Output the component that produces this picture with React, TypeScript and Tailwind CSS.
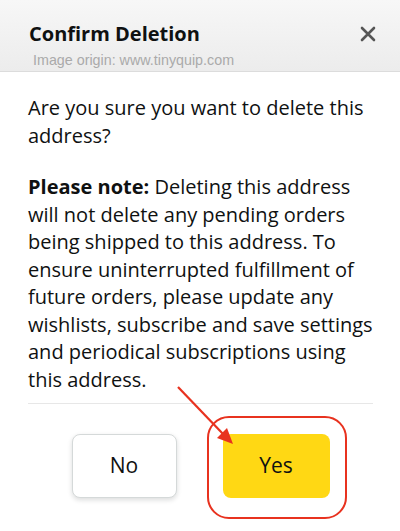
import React from "react";

const font = { fontFamily: '"Open Sans", "Noto Sans", Arial, sans-serif' };

const CloseIcon = () => (
	<svg width="16" height="16" viewBox="0 0 16 16" className="text-[#555]">
		<path d="M2 2 L14 14 M14 2 L2 14" stroke="currentColor" strokeWidth="2.6" strokeLinecap="round" />
	</svg>
);

// red callout drawn over the confirm button
const Callout = () => (
	<svg className="absolute inset-0 pointer-events-none" width="400" height="531" viewBox="0 0 400 531">
		<rect x="208" y="417" width="138" height="101" rx="21" fill="none" stroke="#e8321f" strokeWidth="2" />
		<line x1="178" y1="387" x2="224" y2="435" stroke="#e8321f" strokeWidth="2.2" />
		<polygon points="233,444 217,438 227,428" fill="#e8321f" />
	</svg>
);

export default function App() {
	return (
		<div className="relative w-[400px] h-[531px] bg-white overflow-hidden text-[#111]" style={font}>
			<div className="h-[72px] border-b border-[#dcdcdc] bg-gradient-to-b from-[#f7f7f7] to-[#ececec] pl-[29px] pr-[24px] pt-[20px] relative">
				<div className="flex items-center justify-between">
					<h1 className="text-[20px] leading-[28px] font-bold text-[#0f1111]">Confirm Deletion</h1>
					<CloseIcon />
				</div>
				<p className="text-[14.3px] leading-[16px] text-[#aaa] pl-[4px] mt-[4px]" style={{ fontFamily: '"Liberation Sans", Arial, sans-serif' }}>
					Image origin: www.tinyquip.com
				</p>
			</div>
			<div className="pl-[28px] pr-[22px] pt-[22px] text-[20px] leading-[27.5px] text-[#0f1111]">
				<p>Are you sure you want to delete this address?</p>
				<p className="mt-[24px]">
					<span className="font-bold">Please note:</span> Deleting this address will not delete any pending orders being shipped to this address. To ensure uninterrupted fulfillment of future orders, please update any wishlists, subscribe and save settings and periodical subscriptions using this address.
				</p>
				<div className="mt-[10px] mr-[5px] border-t border-[#e7e7e7]" />
				<div className="flex justify-center gap-[46px] mt-[30px] pr-[5px]">
					<button className="w-[105px] h-[64px] rounded-[8px] border border-[#d5d9d9] bg-white shadow-[0_2px_5px_rgba(15,17,17,0.15)] text-[21px]">
						No
					</button>
					<button className="w-[107px] h-[64px] rounded-[8px] bg-[#ffd814] text-[21px]">Yes</button>
				</div>
			</div>
			<Callout />
		</div>
	);
}
